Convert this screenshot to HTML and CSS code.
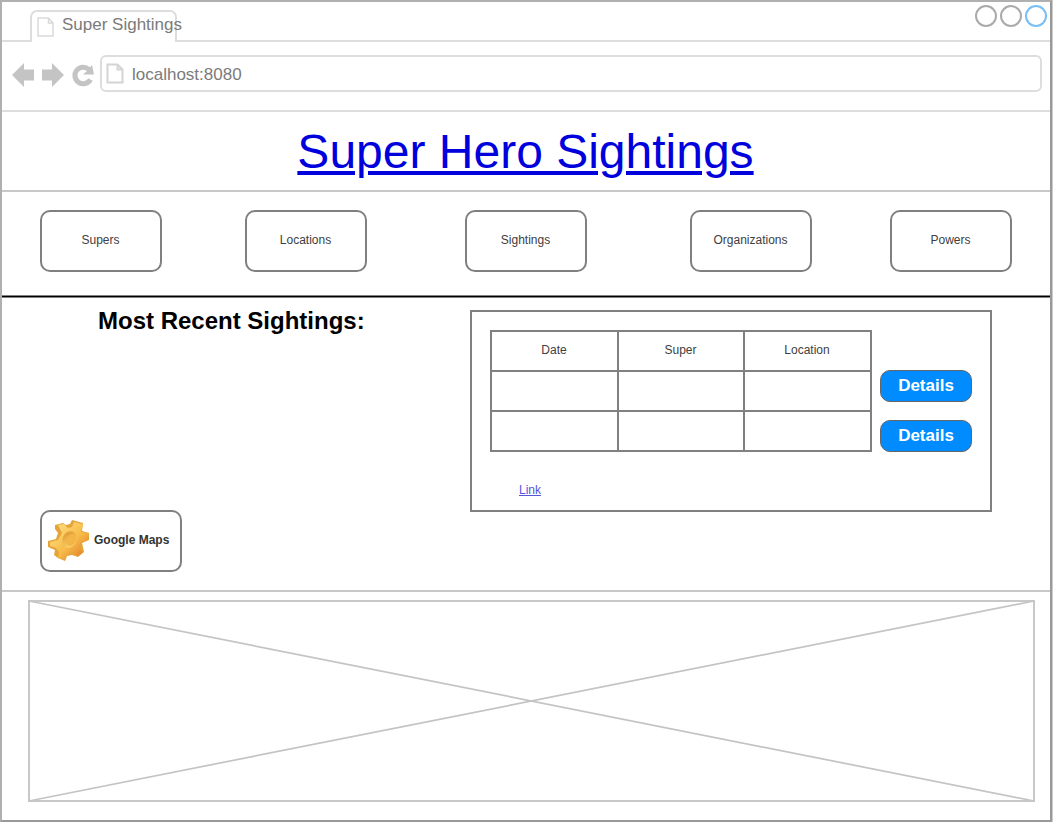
FILE: index.html
```html
<!DOCTYPE html>
<html lang="en">
<head>
<meta charset="utf-8">
<title>Super Sightings</title>
<link rel="stylesheet" href="styles.css">
</head>
<body>
<div class="window">
  <header class="tabs">
    <div class="tab">
      <svg class="tab-icon" width="17" height="20" viewBox="0 0 17 20"><path d="M1 1H11.500L16 6V19H1ZM11.500 1V6H16" fill="none" stroke="#dadada" stroke-width="1.500"/></svg>
      <span class="tab-title">Super Sightings</span>
    </div>
    <div class="tab-rest">
      <div class="controls"><i class="dot"></i><i class="dot"></i><i class="dot dot-blue"></i></div>
    </div>
  </header>
  <div class="toolbar">
    <svg class="nav-icons" width="84" height="26" viewBox="0 0 84 26">
      <g fill="#c4c4c4"><path d="M0 13L12 1V7.500H22V18.500H12V25Z"/><path d="M52 13L40 1V7.500H30V18.500H40V25Z"/><path d="M80 3L82 12.500H71L75 9Z"/></g>
      <path d="M77 7.500A8.300 8.300 0 1 0 78.500 17.500" fill="none" stroke="#c4c4c4" stroke-width="5"/>
    </svg>
    <div class="address">
      <svg width="18" height="21" viewBox="0 0 18 21"><path d="M1.500 1.500H11.500L16.500 6.500V19.500H1.500ZM11.500 1.500V6.500H16.500" fill="none" stroke="#d4d4d4" stroke-width="2"/></svg>
      <span>localhost:8080</span>
    </div>
  </div>
  <div class="banner"><a class="title">Super Hero Sightings</a></div>
  <nav class="menu">
    <a class="box">Supers</a><a class="box">Locations</a><a class="box">Sightings</a><a class="box">Organizations</a><a class="box">Powers</a>
  </nav>
  <main class="content">
    <section class="left">
      <h1>Most Recent Sightings:</h1>
      <button class="maps">
        <svg width="44" height="44" viewBox="0 0 44 44">
          <defs>
            <linearGradient id="face" x1="0" y1="0" x2="1" y2="1"><stop offset="0" stop-color="#ffe48a"/><stop offset=".55" stop-color="#f7bb48"/><stop offset="1" stop-color="#dc6c20"/></linearGradient>
            <linearGradient id="hole" x1="0" y1="0" x2="1" y2="1"><stop offset="0" stop-color="#dd9228"/><stop offset="1" stop-color="#ffdc7c"/></linearGradient>
          </defs>
          <path d="M9 7L17 5L20 7L24 6L26 2L37 5L36 13L43 15L43 22L36 25L38 34L32 39L26 37L21 38L19 43L12 40L8 37L9 32L2 29L2 23L10 21L12 15L9 11Z" fill="#e5a338"/>
          <path d="M12 7L18 6L22 10L26 9L28 4L37 6L35 14L43 15L42 22L35 24L33 29L37 34L32 38L26 35L21 37L19 42L12 40L13 34L10 30L4 28L4 24L12 22L16 15Z" fill="url(#face)"/>
          <ellipse cx="23.500" cy="21.500" rx="7" ry="8.500" transform="rotate(25 23.500 21.500)" fill="url(#hole)"/>
          <ellipse cx="25" cy="22" rx="4.500" ry="6" transform="rotate(25 25 22)" fill="#f3b546"/>
        </svg>
        <span>Google Maps</span>
      </button>
    </section>
    <section class="panel">
      <div class="records">
        <div class="grid">
          <span>Date</span><span>Super</span><span>Location</span>
          <span></span><span></span><span></span>
          <span></span><span></span><span></span>
        </div>
        <div class="actions"><button class="details">Details</button><button class="details">Details</button></div>
      </div>
      <a class="link">Link</a>
    </section>
  </main>
  <footer class="map">
    <svg width="1007" height="202" viewBox="0 0 1007 202"><rect x="1" y="1" width="1005" height="200" fill="none" stroke="#c8c8c8" stroke-width="2"/><path d="M1 1L1006 201M1006 1L1 201" stroke="#c4c4c4" stroke-width="1.700"/></svg>
  </footer>
</div>
</body>
</html>
```
FILE: styles.css
```css
* { box-sizing: border-box; }
body { margin: 0; background: #fff; font-family: "Liberation Sans", Arial, sans-serif; font-size: 12px; color: #404040; overflow: hidden; }
svg { display: block; flex: none; }
button { font-family: inherit; padding: 0; background: #fff; }
.window { width: 1052px; height: 822px; border: 2px solid #b0b0b0; border-right-color: #999; border-bottom-color: #999; box-shadow: 1px 0 #ccc; }
.tabs { display: flex; height: 40px; padding-left: 28px; background: linear-gradient(#ddd, #ddd) 0 38px / 28px 2px no-repeat; }
.tab { display: flex; width: 147px; height: 32px; margin-top: 8px; padding: 6px 0 0 5px; border: 2px solid #ddd; border-bottom: 0; border-radius: 7px 7px 0 0; flex: none; white-space: nowrap; }
.tab-icon { margin-right: 8px; margin-top: -1px; }
.tab-title { font-size: 17px; line-height: 20px; margin-top: -3px; color: #7b7b7b; }
.tab-rest { flex: 1; border-bottom: 2px solid #ddd; display: flex; justify-content: flex-end; padding: 3px 3px 0 0; }
.controls { display: flex; gap: 3px; }
.dot { width: 22px; height: 22px; border: 2px solid #aaa; border-radius: 50%; }
.dot-blue { border-color: #78bff5; }
.toolbar { height: 70px; display: flex; border-bottom: 2px solid #ddd; padding: 13px 8px 0 10px; }
.nav-icons { margin-top: 7px; }
.address { display: flex; flex: 1; height: 37px; margin-left: 4px; padding: 7px 0 0 4px; border: 2px solid #ddd; border-radius: 6px; font-size: 17px; line-height: 21px; color: #7b7b7b; gap: 8px; }
.address svg { margin-top: -1px; }
.banner { height: 80px; border-bottom: 2px solid #c8c8c8; text-align: center; padding-right: 1px; }
.title { font-size: 48px; line-height: 79px; color: #00d; text-decoration: underline; text-decoration-thickness: 4px; text-underline-offset: 3px; }
.menu { display: grid; grid-template-columns: 205px 220px 225px 200px 122px; height: 106px; padding: 18px 0 0 38px; background: linear-gradient(#808080 0 1px, #000 1px 2px, #808080 2px) bottom / 100% 3px no-repeat; }
.box { width: 122px; height: 62px; border: 2px solid #808080; border-radius: 10px; text-align: center; line-height: 56px; padding-right: 1px; }
.content { display: flex; height: 292px; padding: 12px 0 0 38px; }
.left { width: 430px; }
h1 { margin: 0 0 0 58px; font-size: 24px; line-height: 22px; height: 200px; color: #000; }
.maps { display: flex; align-items: center; width: 142px; height: 62px; border: 2px solid #808080; border-radius: 10px; padding: 0 0 2px 4px; gap: 4px; font-size: 12px; font-weight: bold; color: #333; }
.panel { width: 522px; height: 202px; border: 2px solid #808080; padding: 18px; }
.records { display: flex; gap: 8px; }
.grid { display: grid; grid-template-columns: 127px 126px 127px; grid-template-rows: repeat(3, 40px); width: 382px; height: 122px; border-top: 2px solid #808080; border-left: 2px solid #808080; text-align: center; line-height: 36px; }
.grid span { border-right: 2px solid #808080; border-bottom: 2px solid #808080; padding-right: 1px; }
.actions { display: flex; flex-direction: column; gap: 18px; padding-top: 40px; }
.details { width: 92px; height: 32px; border: 1px solid #666; border-radius: 10px; background: #008cff; color: #fff; font-size: 17px; font-weight: bold; line-height: 28px; padding-bottom: 1px; }
.link { display: block; margin: 31px 0 0 29px; line-height: 14px; color: #55d; text-decoration: underline; }
.map { border-top: 2px solid #c8c8c8; height: 230px; padding: 8px 0 0 26px; }
```
